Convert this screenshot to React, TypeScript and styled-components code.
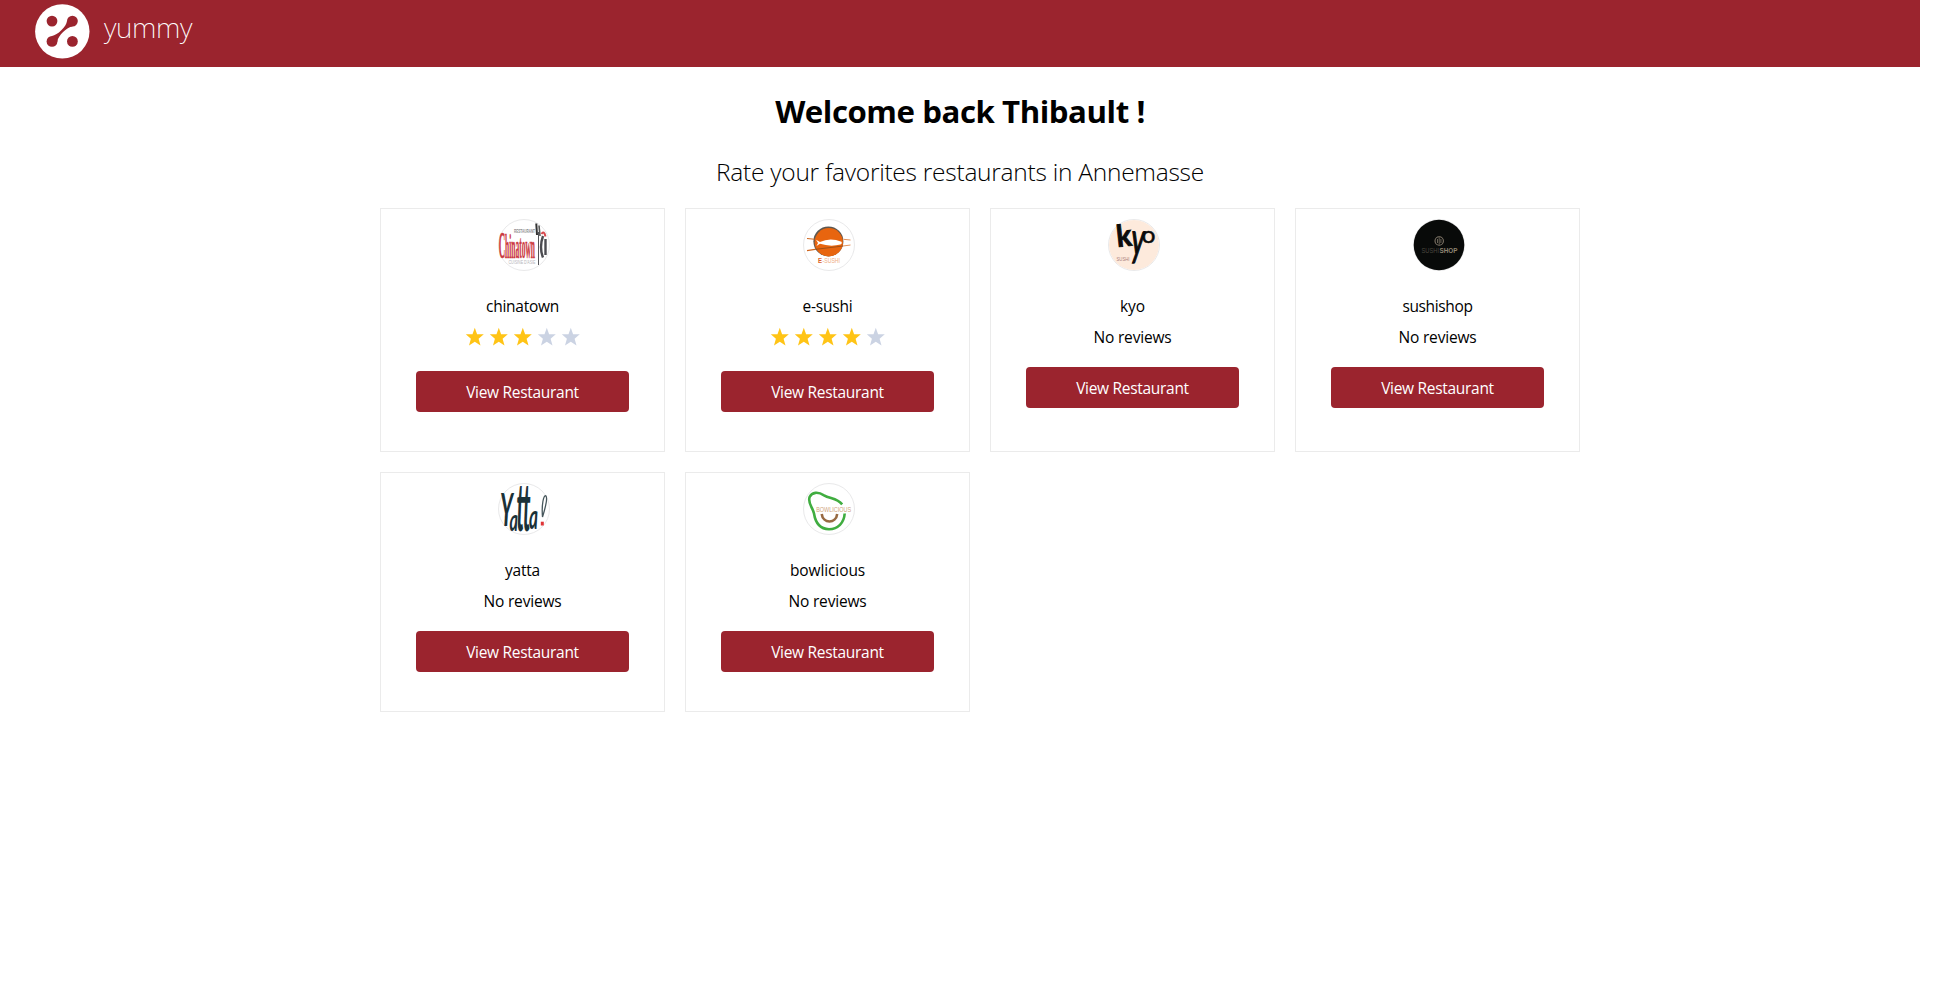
import React from 'react';
import styled, { createGlobalStyle } from 'styled-components';

const GlobalStyle = createGlobalStyle`
  *, *::before, *::after { box-sizing: border-box; }
  body {
    margin: 0;
    background: #fff;
    color: #000;
    font-family: "Segoe UI", "Open Sans", "Noto Sans", sans-serif;
    font-size: 15.5px;
    line-height: 24px;
  }
`;

const Page = styled.div`
  width: 1920px;
`;

const Header = styled.header`
  display: flex;
  align-items: flex-start;
  gap: 14px;
  height: 67px;
  padding: 4px 35px;
  background: #9b242e;
`;

const Mark = styled.svg`
  width: 55px;
  height: 55px;
`;

const Brand = styled.span`
  padding-top: 3px;
  color: #fff;
  font-family: "Noto Sans", sans-serif;
  font-size: 28px;
  font-weight: 200;
  line-height: 40px;
  letter-spacing: -0.35px;
`;

const Main = styled.main`
  display: flex;
  flex-direction: column;
  align-items: center;
  padding-top: 20px;
`;

const Title = styled.h1`
  margin: 0;
  font-size: 31.2px;
  font-weight: 700;
  line-height: 48px;
  letter-spacing: -0.44px;
`;

const Subtitle = styled.h2`
  margin: 19px 0 18px;
  font-size: 24.5px;
  font-weight: 300;
  line-height: 36px;
  letter-spacing: -0.26px;
`;

const Grid = styled.section`
  display: grid;
  grid-template-columns: repeat(4, 285px);
  gap: 20px;
  margin-left: 40px;
`;

const Card = styled.article`
  display: flex;
  flex-direction: column;
  align-items: center;
  padding: 10px 0 39px;
  border: 1px solid #ebebeb;
`;

const Avatar = styled.div`
  width: 52px;
  height: 52px;
  margin: 0 0 23px 3px;
  border: 1px solid #e9e9ea;
  border-radius: 50%;

  svg {
    display: block;
    width: 50px;
    height: 50px;
    overflow: visible;
  }
`;

const Label = styled.p<{ $tracking: number }>`
  margin: 0;
  letter-spacing: ${(p) => p.$tracking}px;
`;

const Feedback = styled.div`
  margin: 7px 0 18px;
`;

const Stars = styled.div`
  display: flex;
  height: 28px;
`;

const Star = styled.svg<{ $on: boolean }>`
  width: 24px;
  height: 24px;
  fill: ${(p) => (p.$on ? '#ffc416' : '#cbd3e3')};
`;

const Button = styled.button`
  width: 213px;
  height: 41px;
  padding: 1px 0 0;
  border: 0;
  border-radius: 4px;
  background: #9b242e;
  color: #fff;
  font: inherit;
  letter-spacing: -0.3px;
`;

const fit = { lengthAdjust: 'spacingAndGlyphs' as const };

const ChinatownLogo = () => (
  <svg viewBox="1 1 50 50">
    <g fontFamily="Liberation Serif, serif" fontWeight="700" fill="#cc3a42" stroke="#cc3a42" strokeWidth=".15">
      <text transform="translate(0.8 38.5) scale(1 3)" fontSize="12.5" textLength="6.5" {...fit}>C</text>
      <text transform="translate(7 38.5) scale(1 3.2)" fontSize="10.5" textLength="30" {...fit}>hinatown</text>
    </g>
    <g fontFamily="Liberation Sans, sans-serif">
      <text x="16" y="14.2" fontSize="6" fontWeight="700" fill="#8a8a8d" textLength="21" {...fit}>RESTAURANT</text>
      <text x="10.5" y="45" fontSize="5.5" fill="#b5b5b8" textLength="27" {...fit}>CUISINE D'ASIE</text>
    </g>
    <path d="M40.5 13V46" stroke="#55555a" strokeWidth="1" />
    <path d="M38.3 4.5L39 16" stroke="#333" strokeWidth="2" />
    <path d="M41 6.5L42 17" stroke="#555" strokeWidth="1.6" />
    <path d="M45 17C42.5 24 42.5 32 45 38.5M47.5 20V36" stroke="#4b4b50" strokeWidth="2.4" fill="none" />
    <path d="M43.5 15Q46 11 47.5 17.5" stroke="#d7474c" strokeWidth="2" fill="none" />
  </svg>
);

const EsushiLogo = () => (
  <svg viewBox="1 1 50 50">
    <circle cx="25.4" cy="22.4" r="15" fill="#5d5750" />
    <circle cx="25.8" cy="23.2" r="14.2" fill="#e8650f" />
    <path d="M4 19.5L11.5 20.3M4 31.6L12 30.4" stroke="#cf661f" strokeWidth="1.1" />
    <path d="M12 30.4L40 27" stroke="#8f4a18" strokeWidth=".8" />
    <path d="M40.5 20.3L47.5 21M40 27L47.5 26" stroke="#df8448" strokeWidth=".9" />
    <path d="M13 20.8L17 23Q27 18 38.5 22.7Q39.8 24.3 37.5 25.6Q27 28 17 24.8L13.5 27L15 24Z" fill="#fff" />
    <g fontFamily="Liberation Sans, sans-serif" fontSize="6.6">
      <text x="15" y="43.6" fontWeight="700" fill="#d9622b" textLength="4" {...fit}>E</text>
      <text x="19.5" y="43.6" fill="#efac83" textLength="17.5" {...fit}>-SUSHI</text>
    </g>
  </svg>
);

const KyoLogo = () => (
  <svg viewBox="1 1 50 50">
    <circle cx="26" cy="26" r="25" fill="#fdeadc" />
    <g fontFamily="Lato, sans-serif" fill="#0b0b0b" stroke="#0b0b0b">
      <text transform="translate(9.5 28) rotate(-6)" fontSize="30" fontWeight="700" strokeWidth="1" textLength="15" {...fit}>k</text>
      <text transform="translate(22 35.5) skewX(-6) scale(1 1.7)" fontSize="27" strokeWidth=".9" textLength="13" {...fit}>y</text>
      <text transform="translate(33.5 23.5)" fontSize="24" strokeWidth=".5" textLength="14" {...fit}>o</text>
    </g>
    <text x="8.5" y="41.6" fontFamily="Liberation Sans, sans-serif" fontSize="5.6" fill="#a97f7c" textLength="13" {...fit}>SUSHI</text>
  </svg>
);

const SushishopLogo = () => (
  <svg viewBox="1 1 50 50">
    <circle cx="26" cy="26" r="25.3" fill="#080a09" />
    <circle cx="26.2" cy="22" r="4.2" fill="none" stroke="#82786a" strokeWidth="1.1" />
    <path d="M26.2 18.5V25.5M24.5 20V24M27.9 20V24" stroke="#82786a" strokeWidth=".8" />
    <g fontFamily="Liberation Sans, sans-serif" fontSize="6.8">
      <text x="8.5" y="34" fill="#4b473f" textLength="17.5" {...fit}>SUSHI</text>
      <text x="26.4" y="34" fontWeight="700" fill="#8f8471" textLength="18" {...fit}>SHOP</text>
    </g>
  </svg>
);

const YattaLogo = () => (
  <svg viewBox="1 1 50 50">
    <g fontFamily="Lato, sans-serif" fontStyle="italic" fontWeight="700" fill="#1b3138">
      <text transform="translate(2 43) scale(1 2.2)" fontSize="21" textLength="13" {...fit}>Y</text>
      <text transform="translate(11.5 47.5) scale(1 1.7)" fontSize="18" textLength="8.5" {...fit}>a</text>
      <text transform="translate(18.5 48) scale(1 3.15)" fontSize="21" textLength="14" {...fit}>tt</text>
      <text transform="translate(31 45.5) scale(1 1.9)" fontSize="18" textLength="9" {...fit}>a</text>
    </g>
    <path d="M44.5 34C43.5 22 45.5 11 48 13C50 16 47 26 44.5 34Z" fill="none" stroke="#46565b" strokeWidth="1.3" />
    <path d="M42.8 38.7h3v3.8h-3z" fill="#df3336" />
  </svg>
);

const BowliciousLogo = () => (
  <svg viewBox="1 1 50 50">
    <g fill="none">
      <path d="M39.2 21.3C34 15 27 15.8 21 12.3C15 8.5 9 9 6.6 14C4.5 20 9.5 24 11 30.5C12.5 40 17 46 26 46.2C35 46 41 40 41.7 30.5" stroke="#40ad40" strokeWidth="2.6" />
      <path d="M18.7 31C20 41 33 41 34.2 31" stroke="#986a42" strokeWidth="2.6" />
    </g>
    <text x="13.2" y="28.6" fontFamily="Liberation Sans, sans-serif" fontSize="7.6" fill="#cfa47c" textLength="35" {...fit}>BOWLICIOUS</text>
  </svg>
);

type Restaurant = { name: string; tracking: number; rating?: number; Logo: () => React.JSX.Element };

const restaurants: Restaurant[] = [
  { name: 'chinatown', tracking: -0.27, rating: 3, Logo: ChinatownLogo },
  { name: 'e-sushi', tracking: -0.18, rating: 4, Logo: EsushiLogo },
  { name: 'kyo', tracking: 0, Logo: KyoLogo },
  { name: 'sushishop', tracking: -0.37, Logo: SushishopLogo },
  { name: 'yatta', tracking: -0.2, Logo: YattaLogo },
  { name: 'bowlicious', tracking: -0.1, Logo: BowliciousLogo },
];

const Rating = ({ value }: { value: number }) => (
  <Stars>
    {[1, 2, 3, 4, 5].map((n) => (
      <Star key={n} viewBox="0 0 24 24" $on={n <= value}>
        <path d="M11.8 2.8L14.1 9.3H20.8L15.6 13.7L17.5 20.6L11.8 16.8L6 20.6L7.9 13.7L2.8 9.3H9.5Z" />
      </Star>
    ))}
  </Stars>
);

export default function App() {
  return (
    <>
      <GlobalStyle />
      <Page>
        <Header>
          <Mark viewBox="35 4 55 55">
            <circle cx="62.3" cy="31.4" r="27.2" fill="#fff" />
            <g fill="#9b242e">
              <circle cx="52" cy="21.1" r="5.4" />
              <circle cx="72.4" cy="41.4" r="5.4" />
              <circle cx="72.4" cy="21.1" r="5.4" />
              <circle cx="52" cy="41.4" r="5.4" />
              <path d="M67 21.1C66.3 27 57.5 35.2 52 36V41.4H57.4C58 35.5 67 27.2 72.4 26.5V21.1Z" />
            </g>
          </Mark>
          <Brand>yummy</Brand>
        </Header>
        <Main>
          <Title>Welcome back Thibault !</Title>
          <Subtitle>Rate your favorites restaurants in Annemasse</Subtitle>
          <Grid>
            {restaurants.map(({ name, tracking, rating, Logo }) => (
              <Card key={name}>
                <Avatar>
                  <Logo />
                </Avatar>
                <Label $tracking={tracking}>{name}</Label>
                <Feedback>
                  {rating ? <Rating value={rating} /> : <Label $tracking={-0.18}>No reviews</Label>}
                </Feedback>
                <Button>View Restaurant</Button>
              </Card>
            ))}
          </Grid>
        </Main>
      </Page>
    </>
  );
}
